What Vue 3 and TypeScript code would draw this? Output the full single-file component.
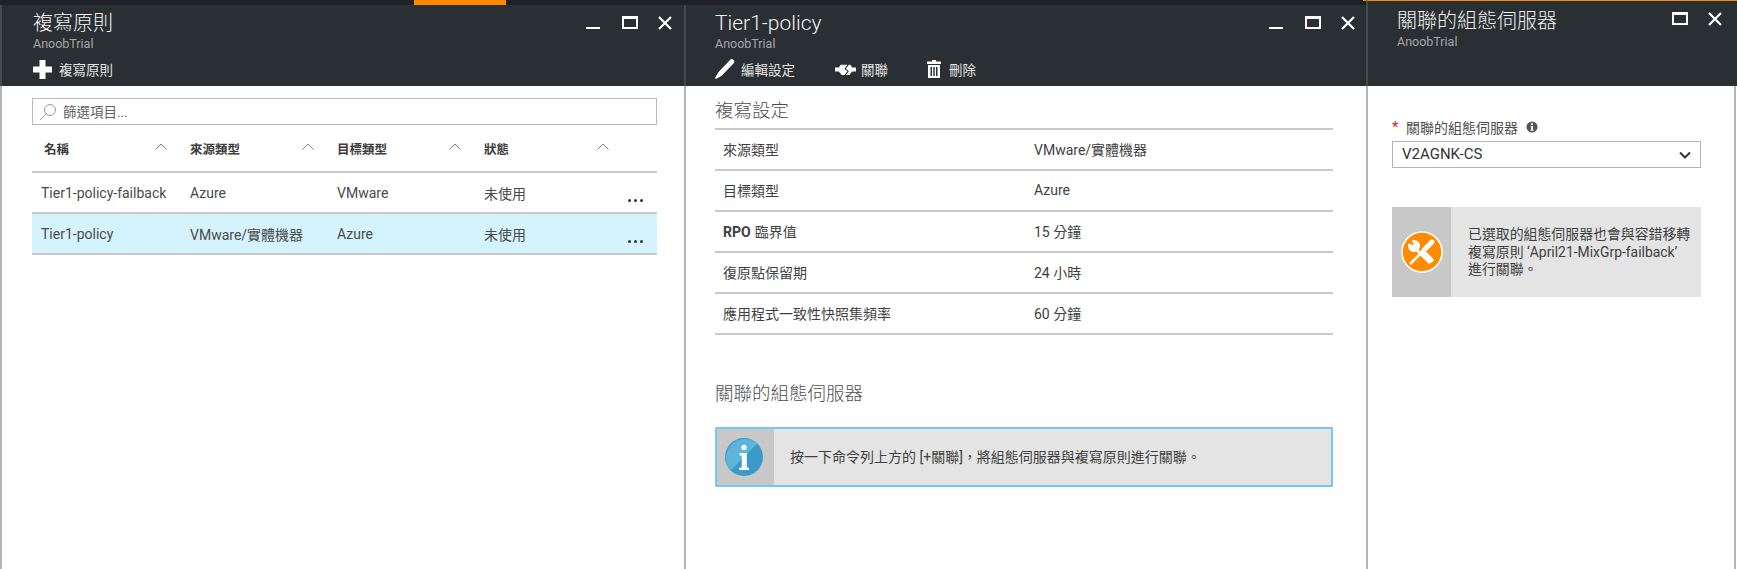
<script setup lang="ts">
const policies = [
  { name: 'Tier1-policy-failback', source: 'Azure', target: 'VMware', status: '未使用', selected: false },
  { name: 'Tier1-policy', source: 'VMware/實體機器', target: 'Azure', status: '未使用', selected: true },
]
const columns = ['名稱', '來源類型', '目標類型', '狀態']
const settings = [
  { label: '來源類型', value: 'VMware/實體機器' },
  { label: '目標類型', value: 'Azure' },
  { label: '臨界值', prefix: 'RPO', value: '15 分鐘' },
  { label: '復原點保留期', value: '24 小時' },
  { label: '應用程式一致性快照集頻率', value: '60 分鐘' },
]
</script>

<template>
  <div class="page">
    <!-- policy list -->
    <section class="panel first">
      <div class="strip"><span class="tab"></span></div>
      <header class="head with-strip">
        <div class="top">
          <div>
            <h1>複寫原則</h1>
            <p class="sub">AnoobTrial</p>
          </div>
          <div class="win">
            <span class="win-min"></span>
            <span class="win-max"></span>
            <svg class="win-close" viewBox="0 0 14 14"><path d="M1 1l12 12M13 1L1 13" /></svg>
          </div>
        </div>
        <nav class="cmds">
          <span class="cmd">
            <svg class="ic-plus" viewBox="0 0 19 19"><path d="M6.500 0h6v6.500H19v6h-6.500V19h-6v-6.500H0v-6h6.500z" /></svg>
            複寫原則
          </span>
        </nav>
      </header>
      <div class="body list-body">
        <div class="search">
          <svg class="ic-search" viewBox="0 0 18 18"><circle cx="11" cy="7" r="5.500" /><path d="M7 11l-6 6" /></svg>
          <span>篩選項目...</span>
        </div>
        <div class="grid grid-head">
          <div v-for="c in columns" :key="c" class="th">
            <span>{{ c }}</span>
            <svg class="caret" viewBox="0 0 12 7"><path d="M.5 6.500L6 1l5.500 5.500" /></svg>
          </div>
        </div>
        <div v-for="p in policies" :key="p.name" class="grid row" :class="{ selected: p.selected }">
          <div class="td name">{{ p.name }}</div>
          <div class="td">{{ p.source }}</div>
          <div class="td">{{ p.target }}</div>
          <div class="td status">
            <span>{{ p.status }}</span>
            <span class="dots"><i></i><i></i><i></i></span>
          </div>
        </div>
      </div>
    </section>

    <!-- policy details -->
    <section class="panel second">
      <div class="strip strip-end"><span class="tab-edge"></span></div>
      <header class="head with-strip">
        <div class="top">
          <div>
            <h1 class="latin-title">Tier1-policy</h1>
            <p class="sub">AnoobTrial</p>
          </div>
          <div class="win">
            <span class="win-min"></span>
            <span class="win-max"></span>
            <svg class="win-close" viewBox="0 0 14 14"><path d="M1 1l12 12M13 1L1 13" /></svg>
          </div>
        </div>
        <nav class="cmds gap">
          <span class="cmd edit">
            <svg class="ic-pencil" viewBox="0 0 20 20"><path d="M15.500 0.500c1-.8 2.200-.4 3 .5.900.9 1.200 2 .4 3L7 16.500 1 20l-1-1 3.500-6z" /></svg>
            編輯設定
          </span>
          <span class="cmd link">
            <svg class="ic-link" viewBox="0 0 22 13" preserveAspectRatio="none"><path d="M0 4h4l2-3h7L10 5.500l3 3L10 13H7L4 9H0zM14.500 1H16l2 3h4v5h-4l-3 4h-3.500l3-4.500-3-3z" /></svg>
            關聯
          </span>
          <span class="cmd trash">
            <svg class="ic-trash" viewBox="0 0 14 18"><path d="M5 0h4v1.500h5V4H0V1.500h5zM1 5h12v13H1zM3.500 7v9h1.500V7zM6.250 7v9h1.500V7zM9 7v9h1.500V7z" fill-rule="evenodd" /></svg>
            刪除
          </span>
        </nav>
      </header>
      <div class="body detail-body">
        <h2 class="sec-first">複寫設定</h2>
        <div class="set-list">
          <div v-for="s in settings" :key="s.label" class="set-row">
            <span class="set-label"><b v-if="s.prefix" class="prefix">{{ s.prefix }}</b>{{ s.label }}</span>
            <span>{{ s.value }}</span>
          </div>
        </div>
        <h2 class="sec-second">關聯的組態伺服器</h2>
        <div class="note note-info">
          <div class="note-side">
            <svg class="ic-info" viewBox="0 0 38 38">
              <circle cx="19" cy="19" r="19" fill="#3b9ac8" />
              <path d="M5.600 32.400A19 19 0 0 1 32.400 5.600z" fill="#5db5da" />
              <circle cx="19" cy="9.500" r="2.700" fill="#fff" />
              <path d="M14.500 15h7.300v14.500h2.200v2.500H14.300v-2.500h2.500V17.500h-2.300z" fill="#fff" />
            </svg>
          </div>
          <div class="note-text">按一下命令列上方的 [+關聯]，將組態伺服器與複寫原則進行關聯。</div>
        </div>
      </div>
    </section>

    <!-- associated config server -->
    <section class="panel third">
      <header class="head no-strip">
        <div class="top">
          <div>
            <h1>關聯的組態伺服器</h1>
            <p class="sub">AnoobTrial</p>
          </div>
          <div class="win">
            <span class="win-max"></span>
            <svg class="win-close" viewBox="0 0 14 14"><path d="M1 1l12 12M13 1L1 13" /></svg>
          </div>
        </div>
      </header>
      <div class="body form-body">
        <div class="field-label">
          <span class="star">*</span>
          <span>關聯的組態伺服器</span>
          <svg class="ic-tip" viewBox="0 0 12 12">
            <circle cx="6" cy="6" r="5.500" fill="#555" />
            <path d="M5 2.300h2v1.700H5zM4.700 5h2.300v3.700h.600v1H4.500v-1h.700V6h-.500z" fill="#fff" />
          </svg>
        </div>
        <div class="select">
          <span>V2AGNK-CS</span>
          <svg class="ic-chev" viewBox="0 0 12 8"><path d="M1 1.500l5 5 5-5" /></svg>
        </div>
        <div class="note note-warn">
          <div class="note-side">
            <svg class="ic-tools" viewBox="0 0 42 42">
              <circle cx="21" cy="21" r="20" fill="#ff8c00" stroke="#fff" stroke-width="1.500" />
              <circle cx="13" cy="15" r="6" fill="#fff" />
              <path d="M13 14.500L6.500 12 10 7.500z" fill="#ff8c00" />
              <path d="M15 18l14 14" stroke="#fff" stroke-width="3" fill="none" />
              <path d="M24 23l6 6" stroke="#fff" stroke-width="5" stroke-linecap="round" fill="none" />
              <path d="M31 11l-8 8" stroke="#fff" stroke-width="5" stroke-linecap="round" fill="none" />
              <path d="M23 19L9 33" stroke="#fff" stroke-width="2.500" fill="none" />
            </svg>
          </div>
          <div class="note-text">已選取的組態伺服器也會與容錯移轉<br />複寫原則 ‘April21-MixGrp-failback’<br />進行關聯。</div>
        </div>
      </div>
    </section>
  </div>
</template>

<style>
html, body { background: #fff; }
</style>

<style scoped>
.page {
  display: flex;
  width: 1737px;
  height: 569px;
  overflow: hidden;
  font-family: Roboto, "Noto Sans CJK TC", sans-serif;
  color: #3d3d3d;
  font-size: 14px;
}
.panel { display: flex; flex-direction: column; height: 100%; flex: none; }
.first { width: 684px; }
.second { width: 682px; }
.third { width: 371px; }

.strip { height: 5px; background: #1e2226; flex: none; display: flex; }
.strip-end { justify-content: flex-end; }
.tab { width: 92px; margin-left: 414px; background: #ff8c00; }
.tab-edge { width: 3px; height: 1px; background: #ff8c00; }

.head {
  flex: none;
  box-sizing: border-box;
  background: #2a2f33;
  border-left: 2px solid #454a4e;
  color: #fff;
  padding-left: 31px;
}
.with-strip { height: 81px; padding-top: 4px; }
.second .head { padding-left: 29px; }
.no-strip { height: 86px; padding-top: 6px; padding-left: 29px; border-top: 1px solid #f08a0c; }

.top { display: flex; justify-content: space-between; align-items: flex-start; }
h1 {
  margin: 0;
  font-size: 20px;
  font-weight: 300;
  line-height: 28px;
  color: #f2f2f2;
}
.latin-title { font-size: 21px; }
.sub {
  margin: 0;
  font-size: 12.500px;
  line-height: 14px;
  color: #a4a8ab;
}
.win { display: flex; align-items: flex-start; gap: 21px; padding-top: 7px; }
.first .win { margin-right: 12px; }
.second .win { margin-right: 11px; }
.third .win { margin-right: 15px; }
.no-strip .win { padding-top: 5px; }
.win-min { width: 14px; height: 2px; margin-top: 11px; background: #fff; }
.win-max {
  box-sizing: border-box;
  width: 16px;
  height: 13px;
  border: 2px solid #fff;
  border-top-width: 3px;
  margin-left: 1px;
}
.win-close { width: 14px; height: 14px; margin-left: -1px; }
.win-close path { stroke: #fff; stroke-width: 2.200; fill: none; }

.cmds { display: flex; margin-top: 8px; height: 20px; align-items: center; }
.cmd { display: flex; align-items: center; font-size: 13.500px; color: #e4e4e4; white-space: nowrap; }
.cmd svg { flex: none; fill: #fff; }
.ic-plus { width: 19px; height: 19px; margin-right: 7px; }
.ic-pencil { width: 20px; height: 20px; margin-right: 6px; }
.ic-link { width: 21px; height: 11px; margin-right: 5px; }
.ic-trash { width: 14px; height: 18px; margin-right: 8px; }
.edit { width: 120px; }
.link { width: 92px; }

.body { flex: 1; border-left: 2px solid #b4b4b4; background: #fff; }

.list-body { padding: 12px 27px 0 30px; }
.search {
  box-sizing: border-box;
  height: 27px;
  border: 1px solid #b9b9b9;
  display: flex;
  align-items: center;
  padding-left: 6px;
  padding-bottom: 2px;
  font-size: 13.500px;
  color: #5f5f5f;
}
.ic-search { width: 18px; height: 18px; margin-right: 6px; margin-top: 2px; fill: none; stroke: #9a9a9a; stroke-width: 1; }
.grid { display: grid; grid-template-columns: 151px 147px 147px 180px; }
.grid-head { height: 48px; border-bottom: 2px solid #c9c9c9; box-sizing: border-box; }
.th {
  display: flex;
  justify-content: space-between;
  padding: 14px 16px 0 7px;
  font-size: 12.500px;
  font-weight: 700;
  color: #3c3c3c;
}
.th:first-child { padding-left: 12px; }
.th:last-child { padding-right: 48px; }
.caret { width: 12px; height: 7px; margin-top: 4px; fill: none; stroke: #808080; stroke-width: 1; }
.row {
  height: 41px;
  box-sizing: border-box;
  border-bottom: 2px solid #c9c9c9;
  align-items: center;
}
.selected { background: #d5f3fc; }
.td { padding-left: 7px; font-size: 14px; color: #4a4a4a; white-space: nowrap; }
.name { padding-left: 9px; }
.status { display: flex; justify-content: space-between; padding-right: 14px; }
.dots { display: flex; gap: 3px; align-self: flex-end; padding-bottom: 1px; }
.dots i { width: 3px; height: 3px; border-radius: 50%; background: #333; }

.detail-body { padding: 0 33px 0 29px; }
h2 { margin: 0; font-size: 18.500px; font-weight: 300; line-height: 26px; color: #4d4d4d; }
.sec-first { padding-top: 12px; height: 42px; box-sizing: border-box; }
.set-list { border-top: 2px solid #c9c9c9; }
.set-row {
  display: grid;
  grid-template-columns: 311px 1fr;
  box-sizing: border-box;
  height: 41px;
  padding-left: 8px;
  padding-bottom: 1px;
  align-items: center;
  border-bottom: 2px solid #c9c9c9;
  font-size: 14px;
  color: #3f3f3f;
}
.prefix { margin-right: 4px; }
.sec-second { margin-top: 46px; }
.note { display: flex; }
.note-side { display: flex; align-items: center; justify-content: center; flex: none; background: #c8c8c8; }
.note-text { background: #e4e4e4; flex: 1; display: flex; align-items: center; color: #404040; }
.note-info {
  margin-top: 20px;
  box-sizing: border-box;
  height: 60px;
  border: 2px solid #6fcdea;
  border-radius: 1px;
}
.note-info .note-side { width: 57px; padding-right: 3px; box-sizing: border-box; }
.note-info .note-text { padding: 0 0 3px 16px; font-size: 14px; }
.ic-info { width: 38px; height: 38px; }

.form-body { padding: 0 0 0 24px; margin-right: 1px; border-right: 2px solid #b4b4b4; }
.field-label { display: flex; align-items: center; margin-top: 32px; height: 18px; font-size: 14px; color: #4d4d4d; }
.star { width: 14px; color: #e81123; font-size: 15px; }
.ic-tip { width: 12px; height: 12px; margin-left: 8px; }
.select {
  box-sizing: border-box;
  width: 309px;
  height: 27px;
  margin-top: 5px;
  border: 1px solid #b4b4b4;
  display: flex;
  align-items: center;
  justify-content: space-between;
  padding: 0 9px 2px;
  font-size: 15px;
  color: #333;
}
.ic-chev { width: 12px; height: 8px; margin-top: 2px; fill: none; stroke: #333; stroke-width: 2; }
.note-warn { width: 309px; height: 90px; margin-top: 39px; }
.note-warn .note-side { width: 59px; }
.note-warn .note-text { display: block; padding: 19px 0 0 17px; font-size: 13.900px; line-height: 17.500px; white-space: nowrap; }
.ic-tools { width: 42px; height: 42px; }
</style>
